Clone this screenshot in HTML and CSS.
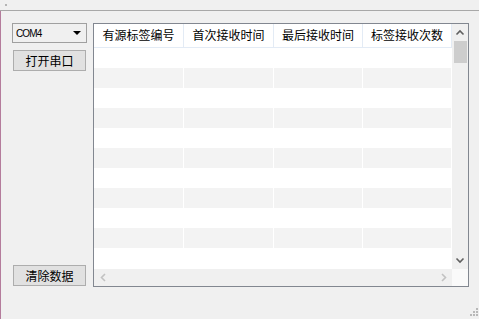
FILE: index.html
```html
<!DOCTYPE html>
<html lang="zh">
<head>
    <meta charset="UTF-8">
    <title>有源标签接收</title>
    <link rel="stylesheet" href="styles.css">
</head>
<body>
    <div class="window">
        <div class="menu-strip"><span class="grip-dot"></span></div>

        <div class="main">
            <div class="side">
                <div class="combo">
                    <span class="combo-text">COM4</span>
                    <span class="combo-arrow"></span>
                </div>
                <div class="btn open-btn">打开串口</div>
                <div class="spacer"></div>
                <div class="btn clear-btn">清除数据</div>
            </div>

            <div class="list">
                <div class="list-body">
                    <div class="grid">
                        <div class="header">
                            <div class="col">有源标签编号</div>
                            <div class="col">首次接收时间</div>
                            <div class="col">最后接收时间</div>
                            <div class="col">标签接收次数</div>
                        </div>
                        <div class="rows" id="rows"></div>
                    </div>
                    <div class="vscroll">
                        <svg class="arrow" width="16" height="17" viewBox="0 0 16 17"><path d="M4.5 10.5 L8 7 L11.5 10.5" fill="none" stroke="#606060" stroke-width="1.6"/></svg>
                        <div class="thumb"></div>
                        <div class="spacer"></div>
                        <svg class="arrow" width="16" height="17" viewBox="0 0 16 17"><path d="M4.5 6.5 L8 10 L11.5 6.5" fill="none" stroke="#606060" stroke-width="1.6"/></svg>
                    </div>
                </div>
                <div class="list-foot">
                    <div class="hscroll">
                        <svg class="arrow" width="17" height="17" viewBox="0 0 17 17"><path d="M10 5 L6.5 8.5 L10 12" fill="none" stroke="#c2c2c2" stroke-width="1.6"/></svg>
                        <div class="spacer"></div>
                        <svg class="arrow" width="17" height="17" viewBox="0 0 17 17"><path d="M7 5 L10.5 8.5 L7 12" fill="none" stroke="#c2c2c2" stroke-width="1.6"/></svg>
                    </div>
                    <div class="corner"></div>
                </div>
            </div>
        </div>

        <svg class="size-grip" width="10" height="10" viewBox="0 0 10 10" fill="#b8b8b8">
            <rect x="8" y="0" width="2" height="2"/>
            <rect x="5" y="3" width="2" height="2"/><rect x="8" y="3" width="2" height="2"/>
            <rect x="2" y="6" width="2" height="2"/><rect x="5" y="6" width="2" height="2"/><rect x="8" y="6" width="2" height="2"/>
        </svg>
    </div>

    <script>
        // 11 empty rows, alternating white / grey
        var rows = document.getElementById('rows');
        for (var i = 0; i < 11; i++) {
            var row = document.createElement('div');
            row.className = 'row' + (i % 2 ? ' alt' : '');
            for (var c = 0; c < 4; c++) {
                var cell = document.createElement('div');
                cell.className = 'col';
                row.appendChild(cell);
            }
            rows.appendChild(row);
        }
    </script>
</body>
</html>
```

FILE: styles.css
```css
* {
    margin: 0;
    padding: 0;
    box-sizing: border-box;
}

body {
    width: 479px;
    height: 319px;
    overflow: hidden;
    background: #f0f0f0;
    font-family: "Noto Sans CJK SC", "Noto Sans", sans-serif;
    font-size: 12px;
    color: #000;
}

.window {
    position: relative;
    height: 319px;
}

.menu-strip {
    height: 11px;
    border-bottom: 1px solid #a8a8a8;
    padding: 4px 0 0 5px;
}

.grip-dot {
    display: block;
    width: 2px;
    height: 2px;
    background: #b4b4b4;
}

.main {
    display: flex;
    height: 308px;
    border-left: 1px solid #b47c9c;
    padding: 12px 0 0 11px;
}

.side {
    display: flex;
    flex-direction: column;
    width: 75px;
    height: 264px;
}

.spacer {
    flex: 1;
}

.combo {
    display: flex;
    align-items: center;
    height: 20px;
    border: 1px solid #a0a0a0;
    background: #f0f0f0;
    padding: 0 5px 0 3px;
}

.combo-text {
    flex: 1;
    font-family: "Liberation Sans", sans-serif;
    font-size: 10px;
    letter-spacing: -0.9px;
    transform: scaleY(1.1);
}

.combo-arrow {
    width: 0;
    height: 0;
    border-left: 4px solid transparent;
    border-right: 4px solid transparent;
    border-top: 4px solid #000;
}

.btn {
    height: 21px;
    margin-left: 1px;
    width: 73px;
    border: 1px solid #adadad;
    background: #e1e1e1;
    text-align: center;
    font-size: 12px;
    line-height: 19px;
}

.open-btn {
    margin-top: 7px;
}

.clear-btn {
    margin-bottom: 1px;
}

.list {
    display: flex;
    flex-direction: column;
    width: 376px;
    height: 264px;
    margin-left: 6px;
    border: 1px solid #828790;
    background: #fff;
}

.list-body {
    display: flex;
    height: 245px;
}

.grid {
    width: 358px;
}

.header {
    display: flex;
    height: 24px;
    border-bottom: 1px solid #e3ebf5;
}

.header .col {
    line-height: 22px;
    text-align: center;
    border-right: 1px solid #e3ebf5;
}

.col {
    width: 89px;
}

.col:nth-child(1),
.col:nth-child(2) {
    width: 90px;
}

.row {
    display: flex;
    height: 20px;
}

.row.alt {
    background: #f3f3f3;
}

.row .col {
    border-right: 1px solid #fff;
}

.vscroll {
    display: flex;
    flex-direction: column;
    align-items: center;
    width: 16px;
    background: #f0f0f0;
}

.arrow {
    display: block;
    flex: none;
}

.thumb {
    width: 13px;
    height: 22px;
    margin-left: 1px;
    background: #cdcdcd;
}

.list-foot {
    display: flex;
    height: 17px;
}

.hscroll {
    display: flex;
    width: 358px;
    background: #f0f0f0;
    padding-left: 1px;
}

.corner {
    width: 16px;
    background: #fafafa;
}

.size-grip {
    position: absolute;
    right: 1px;
    bottom: 1px;
}
```
